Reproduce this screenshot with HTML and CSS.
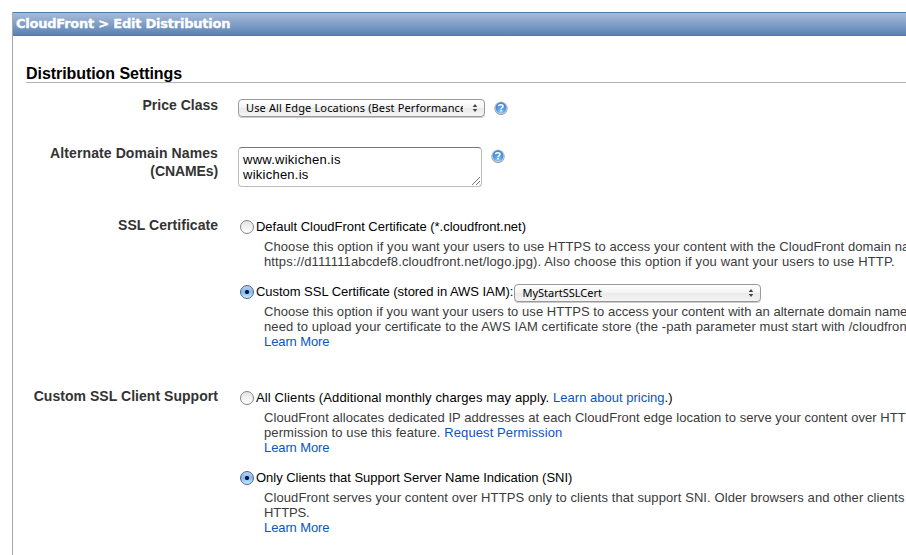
FILE: index.html
```html
<!DOCTYPE html>
<html lang="en">
<head>
<meta charset="utf-8">
<title>CloudFront - Edit Distribution</title>
<link rel="stylesheet" href="styles.css">
</head>
<body>
<svg class="defs" width="0" height="0" aria-hidden="true">
  <defs>
    <radialGradient id="ball" cx="50%" cy="90%" r="85%">
      <stop offset="0" stop-color="#86ccff"/>
      <stop offset=".55" stop-color="#4d98e6"/>
      <stop offset="1" stop-color="#4580cc"/>
    </radialGradient>
    <symbol id="help" viewBox="0 0 14 14">
      <circle cx="7" cy="7.4" r="6.6" fill="#8c8c8c"/>
      <circle cx="7" cy="6.8" r="6.4" fill="#ccd0d6"/>
      <circle cx="7" cy="6.8" r="5.5" fill="url(#ball)"/>
      <path d="M4.6 5.3C4.8 3.1 9.3 3.2 9.1 5.3C9 6.7 7 6.6 7 8.2M7 9.1V10.5" fill="none" stroke="#fff" stroke-width="1.5"/>
    </symbol>
    <symbol id="arrows" viewBox="0 0 6 8">
      <path d="M3 0L5.3 3H.7ZM3 8L.7 5H5.3Z" fill="#444"/>
    </symbol>
  </defs>
</svg>
<div class="panel">
  <div class="titlebar"><span class="title">CloudFront &gt; Edit Distribution</span></div>
  <div class="content">
    <h2 class="heading"><span>Distribution Settings</span></h2>
    <div class="row row-price">
      <div class="label"><span class="l1">Price Class</span></div>
      <div class="field">
        <div class="select"><span class="value v1">Use All Edge Locations (Best Performance)</span><svg class="arrows"><use href="#arrows"/></svg></div>
        <svg class="help"><use href="#help"/></svg>
      </div>
    </div>
    <div class="row row-names">
      <div class="label"><span class="l2">Alternate Domain Names</span><br><span class="l3">(CNAMEs)</span></div>
      <div class="field">
        <div class="textarea">www.wikichen.is<br>wikichen.is<svg class="grip" viewBox="0 0 8 8"><path d="M0 8L8 0M4 8L8 4" stroke="#777" fill="none"/></svg></div>
        <svg class="help"><use href="#help"/></svg>
      </div>
    </div>
    <div class="row row-cert">
      <div class="label"><span class="l4">SSL Certificate</span></div>
      <div class="options">
        <div class="option"><i class="radio"></i><span class="o1">Default CloudFront Certificate (*.cloudfront.net)</span></div>
        <div class="desc">
          <p><span class="d1">Choose this option if you want your users to use HTTPS to access your content with the CloudFront domain na</span></p>
          <p><span class="d2">https://d111111abcdef8.cloudfront.net/logo.jpg). Also choose this option if you want your users to use HTTP.</span></p>
        </div>
        <div class="option"><i class="radio on"></i><span class="o2">Custom SSL Certificate (stored in AWS IAM):</span><div class="select select-cert"><span class="value v2">MyStartSSLCert</span><svg class="arrows"><use href="#arrows"/></svg></div></div>
        <div class="desc">
          <p><span class="d3">Choose this option if you want your users to use HTTPS to access your content with an alternate domain name</span></p>
          <p><span class="d4">need to upload your certificate to the AWS IAM certificate store (the -path parameter must start with /cloudfron</span></p>
          <p><a class="learn">Learn More</a></p>
        </div>
      </div>
    </div>
    <div class="row row-client">
      <div class="label"><span class="l5">Custom SSL Client Support</span></div>
      <div class="options">
        <div class="option"><i class="radio"></i><span class="o3">All Clients (Additional monthly charges may apply. <a>Learn about pricing</a>.)</span></div>
        <div class="desc">
          <p><span class="d5">CloudFront allocates dedicated IP addresses at each CloudFront edge location to serve your content over HTT</span></p>
          <p><span class="d6">permission to use this feature. <a>Request Permission</a></span></p>
          <p><a class="learn">Learn More</a></p>
        </div>
        <div class="option"><i class="radio on"></i><span class="o4">Only Clients that Support Server Name Indication (SNI)</span></div>
        <div class="desc">
          <p><span class="d7">CloudFront serves your content over HTTPS only to clients that support SNI. Older browsers and other clients t</span></p>
          <p><span class="d8">HTTPS.</span></p>
          <p><a class="learn">Learn More</a></p>
        </div>
      </div>
    </div>
  </div>
</div>
</body>
</html>
```
FILE: styles.css
```css
* { box-sizing: border-box; }
html, body { height: 100%; }
body {
  margin: 0;
  padding: 12px 0 0 12px;
  background: #fff;
  overflow: hidden;
  color: #000;
  font: 13px/15px "Liberation Sans", Arial, sans-serif;
}
.defs { position: absolute; }
.panel { height: 543px; overflow: hidden; border-left: 1px solid #aaa; }
.titlebar {
  height: 24px;
  margin-left: -1px;
  padding-left: 3px;
  border: 1px solid #5079ae;
  border-right: 0;
  background: linear-gradient(#a8bcd8, #5a82b5);
  color: #fff;
  font: bold 13px/22px "DejaVu Sans", Verdana, sans-serif;
  white-space: nowrap;
}
.title { letter-spacing: -.23px; -webkit-text-stroke: .3px #fff; }
.content { padding-left: 13px; }
.heading {
  height: 47px;
  margin: 0 0 12px;
  padding-top: 28px;
  border-bottom: 1px solid #b4b4b4;
  font-size: 16px;
  line-height: 19px;
  letter-spacing: -.06px;
}
.row { display: grid; grid-template-columns: 192px 1fr; column-gap: 20px; }
.row-price { height: 48px; }
.row-names { height: 72px; }
.row-cert { height: 171px; }
.label {
  padding-top: 1px;
  color: #333;
  font-size: 14px;
  font-weight: bold;
  line-height: 18px;
  text-align: right;
  white-space: nowrap;
}
.l2 { letter-spacing: .1px; }
.l3 { letter-spacing: -.1px; }
.l4, .l5 { letter-spacing: .04px; }
.field { display: flex; align-items: flex-start; padding-top: 4px; }
.select {
  display: flex;
  align-items: center;
  flex: none;
  width: 247px;
  height: 18px;
  padding: 0 6px 0 7px;
  border: 1px solid #999;
  border-radius: 4px;
  background: linear-gradient(#fff, #f3f3f3 50%, #eaeaea 51%, #f4f4f4);
  box-shadow: 0 1px 0 #ccc;
  font: 11px/16px "Noto Sans", sans-serif;
  white-space: nowrap;
}
.value { flex: none; width: 217px; overflow: hidden; }
.v1 { letter-spacing: .14px; }
.arrows { width: 6px; height: 8px; margin-left: auto; }
.help { width: 14px; height: 14px; margin: 2px 0 0 9px; }
.textarea {
  position: relative;
  width: 244px;
  height: 40px;
  padding: 4px 4px 0;
  border: 1px solid #bbb;
  border-top-color: #777;
  border-radius: 4px;
  letter-spacing: .25px;
}
.grip { position: absolute; right: 1px; bottom: 1px; width: 8px; height: 8px; }
.options { min-width: 0; }
.option { display: flex; align-items: center; height: 24px; padding-bottom: 2px; white-space: nowrap; }
.desc { padding-left: 26px; margin-bottom: 11px; color: #3b3b3b; }
.desc p { margin: 0; height: 15px; white-space: nowrap; }
.radio {
  flex: none;
  width: 14px;
  height: 14px;
  margin: 1px 2px 0;
  border: 1px solid #858585;
  border-radius: 50%;
  background: linear-gradient(#e4e4e4, #fff);
}
.radio.on {
  border-color: #53618f;
  background: radial-gradient(circle at 50% 50%, #0b1838 0 1.8px, transparent 2.4px), linear-gradient(#b4d4f5, #83b9ee 50%, #c4edff);
}
.select-cert { margin: 4px 0 0 1px; }
.o1 { letter-spacing: -.02px; }
.o2 { letter-spacing: -.04px; }
.o3 { letter-spacing: .12px; }
.o3 a { letter-spacing: .01px; }
.o4 { letter-spacing: -.03px; }
.d1 { letter-spacing: .075px; }
.d2 { letter-spacing: .14px; }
.d3 { letter-spacing: .05px; }
.d4 { letter-spacing: .105px; }
.d5 { letter-spacing: .05px; }
.d6 { letter-spacing: .1px; }
.d7 { letter-spacing: .09px; }
.d8 { letter-spacing: -.1px; }
.learn { letter-spacing: -.1px; }
a { color: #0a55c4; }
```
